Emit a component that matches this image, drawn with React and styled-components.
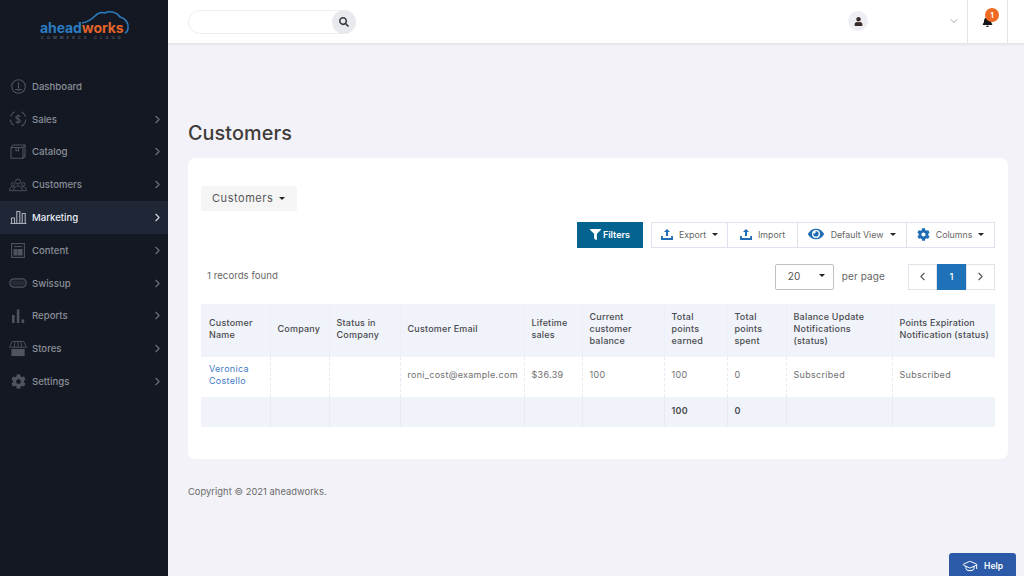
import React from 'react';
import styled, { createGlobalStyle } from 'styled-components';
import { ChevronRight, ChevronLeft, ChevronDown, GraduationCap } from 'lucide-react';
import { FaCog, FaEye, FaFilter, FaSearch, FaUser, FaBell } from 'react-icons/fa';

const GlobalStyle = createGlobalStyle`
  html, body { margin: 0; padding: 0; height: 100%; }
  body { font-family: Inter, "Liberation Sans", sans-serif; background: #f2f2f8; color: #555; overflow: hidden; }
  * { box-sizing: border-box; }
`;

const Page = styled.div`
  display: flex;
  width: 1024px;
  height: 576px;
  position: relative;
  overflow: hidden;
`;

const Sidebar = styled.aside`
  width: 168px;
  flex-shrink: 0;
  background: #131823;
  display: flex;
  flex-direction: column;
`;

const LogoWrap = styled.div`
  height: 70px;
  padding: 10px 0 0 40px;
`;

const Logo = styled.div`
  position: relative;
  width: 90px;
  height: 30px;
`;

const CloudArc = styled.svg`
  position: absolute;
  left: 0;
  top: 0;
`;

const LogoText = styled.div`
  position: absolute;
  left: 0;
  top: 9px;
  font-size: 14px;
  font-weight: 700;
  letter-spacing: -0.1px;
  line-height: 18px;
  color: #2b7cc0;
  white-space: nowrap;
`;

const LogoOrange = styled.span`
  color: #e2642a;
`;

const LogoSub = styled.div`
  position: absolute;
  left: 1px;
  top: 25px;
  font-size: 3.8px;
  letter-spacing: 3.3px;
  line-height: 6px;
  color: #7a7f88;
  white-space: nowrap;
`;

const Nav = styled.nav`
  display: flex;
  flex-direction: column;
`;

const NavItem = styled.a`
  height: 32.8px;
  display: flex;
  align-items: center;
  padding: 0 4px 0 9px;
  font-size: 9.6px;
  font-weight: 500;
  color: ${p => (p.$active ? '#e8edf4' : '#8b8f98')};
  background: ${p => (p.$active ? '#1f2635' : 'transparent')};
`;

const NavIcon = styled.span`
  width: 18px;
  height: 18px;
  margin-right: 5px;
  display: flex;
  align-items: center;
  justify-content: center;
  color: ${p => (p.$active ? '#a9afb9' : '#4e535e')};
`;

const NavLabel = styled.span`
  flex: 1;
`;

const Main = styled.div`
  flex: 1;
  display: flex;
  flex-direction: column;
  min-width: 0;
`;

const Header = styled.header`
  height: 44px;
  background: #fff;
  border-bottom: 1px solid #e4e4ea;
  box-shadow: 0 1px 2px rgba(0, 0, 0, 0.05);
  display: flex;
  align-items: center;
  padding-left: 20px;
`;

const SearchBox = styled.div`
  width: 168px;
  height: 24px;
  display: flex;
  justify-content: flex-end;
  border: 1px solid #eeeef0;
  border-radius: 12px;
`;

const SearchBtn = styled.button`
  width: 24px;
  height: 24px;
  margin: -1px;
  padding: 0;
  border: 0;
  border-radius: 50%;
  background: #e8e9ed;
  color: #3c3c44;
  display: flex;
  align-items: center;
  justify-content: center;
`;

const HeaderRight = styled.div`
  margin-left: auto;
  height: 44px;
  display: flex;
  align-items: center;
  padding-right: 16px;
`;

const Avatar = styled.div`
  width: 20px;
  height: 20px;
  margin-top: -1px;
  border-radius: 50%;
  background: #eeeff4;
  color: #3a2c28;
  display: flex;
  align-items: center;
  justify-content: center;
`;

const UserChevron = styled.div`
  margin: -1px 7px 0 80px;
  color: #85878e;
  display: flex;
`;

const BellCell = styled.div`
  position: relative;
  width: 41px;
  height: 44px;
  border-left: 1px solid #e4e4ea;
  border-right: 1px solid #e4e4ea;
  display: flex;
  align-items: center;
  justify-content: center;
  color: #15151c;
`;

const Badge = styled.span`
  position: absolute;
  top: 8px;
  left: 17px;
  width: 14px;
  height: 14px;
  border-radius: 50%;
  background: #ef6a23;
  color: #fff;
  font-size: 8px;
  font-weight: 600;
  line-height: 14px;
  text-align: center;
`;

const Content = styled.main`
  padding: 77px 16px 0 20px;
`;

const Title = styled.h1`
  margin: 0 0 13px;
  font-size: 19.8px;
  line-height: 24px;
  font-weight: 500;
  letter-spacing: 0.1px;
  color: #403c3a;
`;

const Card = styled.section`
  height: 301px;
  background: #fff;
  border-radius: 7px;
  padding: 28px 13px 0;
`;

const Dropdown = styled.div`
  width: 96px;
  height: 25px;
  background: #f5f5f5;
  border-radius: 2px;
  display: flex;
  align-items: center;
  padding: 0 0 1px 11px;
  gap: 6px;
  font-size: 11px;
  letter-spacing: 0.55px;
  color: #555;
`;

const Caret = styled.span`
  display: inline-block;
  width: 0;
  height: 0;
  border-left: 3px solid transparent;
  border-right: 3px solid transparent;
  border-top: 3px solid #222;
`;

const Toolbar = styled.div`
  display: flex;
  justify-content: flex-end;
  margin-top: 11px;
  height: 26px;
`;

const FilterBtn = styled.button`
  width: 66px;
  height: 26px;
  margin-right: 8px;
  border: 0;
  padding: 0 0 2px;
  background: #05638f;
  color: #fff;
  font: 600 9px Inter, sans-serif;
  display: flex;
  align-items: center;
  justify-content: center;
  gap: 2px;
`;

const ToolGroup = styled.div`
  display: flex;
  border: 1px solid #dfe2ec;
`;

const ToolBtn = styled.div`
  width: ${p => p.$w}px;
  padding-bottom: 2px;
  display: flex;
  align-items: center;
  justify-content: center;
  gap: ${p => p.$gap || 6}px;
  font-size: 8.8px;
  color: #666;
  border-left: ${p => (p.$first ? '0' : '1px solid #dfe2ec')};
  svg { color: #1f6db5; }
`;

const PagerRow = styled.div`
  display: flex;
  align-items: center;
  height: 26px;
  margin-top: 16px;
  padding-left: 6px;
  font-size: 9.6px;
  color: #666;
`;

const Found = styled.span`
  margin: 0 auto 3px 0;
  letter-spacing: 0.05px;
`;

const PerSelect = styled.div`
  width: 59px;
  height: 26px;
  border: 1px solid #bfc1c8;
  border-radius: 2px;
  display: flex;
  align-items: center;
  justify-content: space-between;
  padding: 0 8px 3px 12px;
  color: #555;
  font-size: 10px;
`;

const PerPage = styled.span`
  margin: 0 23px 3px 8px;
  font-size: 10px;
  letter-spacing: 0.1px;
`;

const PageBtn = styled.div`
  width: 29px;
  height: 26px;
  padding-bottom: 2px;
  display: flex;
  align-items: center;
  justify-content: center;
  background: ${p => (p.$active ? '#1f72b8' : '#fff')};
  color: ${p => (p.$active ? '#fff' : '#555')};
  border: 1px solid ${p => (p.$active ? '#1f72b8' : '#e1e3ea')};
  font-size: 9.5px;
  font-weight: 500;
`;

const Table = styled.table`
  margin-top: 14px;
  width: 794px;
  table-layout: fixed;
  border-collapse: collapse;
  font-size: 9px;
  line-height: 12px;
  letter-spacing: 0.2px;
`;

const Th = styled.th`
  height: 53px;
  padding: 0 8px 4px 7px;
  background: #f0f3f9;
  text-align: left;
  font-weight: 500;
  color: #4a4a4f;
  border-left: 1px solid #eceff5;
  &:first-child { padding-left: 8px; border-left: 0; }
  &:last-child { padding-right: 1px; }
`;

const Td = styled.td`
  height: 40px;
  padding: 0 2px 4px 7px;
  color: #707070;
  border-left: 1px dashed #e8e9ee;
  letter-spacing: 0.3px;
  &:first-child { padding-left: 8px; border-left: 0; }
`;

const Total = styled.td`
  height: 30px;
  padding: 0 2px 3px 7px;
  background: #f0f3f9;
  font-weight: 600;
  color: #4a4a4f;
  border-left: 1px solid #e8ebf2;
  &:first-child { border-left: 0; }
`;

const Link = styled.a`
  color: #3f7bc8;
`;

const Copyright = styled.p`
  margin: 27px 0 0;
  font-size: 9.3px;
  line-height: 12px;
  letter-spacing: 0.06px;
  color: #6a6a6a;
`;

const HelpBtn = styled.button`
  position: absolute;
  right: 8px;
  bottom: 0;
  width: 67px;
  height: 23px;
  padding: 2px 0 0 0;
  border: 0;
  border-radius: 3px 3px 0 0;
  background: #2b5ba8;
  color: #fff;
  font: 600 8.5px Inter, sans-serif;
  display: flex;
  align-items: center;
  justify-content: center;
  gap: 6px;
`;

const Gauge = () => (
  <svg width="17" height="17" viewBox="0 0 17 17" fill="none" stroke="currentColor" strokeWidth="1.1">
    <circle cx="8.5" cy="8.5" r="6.8" />
    <path d="M8.5 4.5v6M5 11.5h2.5l1 1.2 1-1.2H12" />
  </svg>
);

const Dollar = () => (
  <svg width="18" height="18" viewBox="0 0 18 18" fill="none" stroke="currentColor" strokeWidth="1.1">
    <path d="M5.6 1.8A7.8 7.8 0 0 0 1.6 6.5M1.3 9.500a7.800 7.800 0 0 0 3.300 5.800M12.400 16.200A7.800 7.800 0 0 0 16.700 9.500M16.400 6.500A7.800 7.800 0 0 0 12.400 1.800" />
    <path d="M11.400 6.800C10.800 5.400 6.800 5.400 6.800 7.500s4.600 1.200 4.600 3.300-4 2.100-4.600.7M9 4.300v9.400" />
  </svg>
);

const Box = () => (
  <svg width="16" height="15" viewBox="0 0 16 15" fill="none" stroke="currentColor" strokeWidth="1.1">
    <path d="M1 3.5 3 1h12v11.5L13 14.2H1z" />
    <path d="M1 3.5h12v10.7M13 3.5 15 1M6 3.5v3.2h2.6V3.5" />
  </svg>
);

const Group = () => (
  <svg width="19" height="14" viewBox="0 0 19 14" fill="none" stroke="currentColor" strokeWidth="1">
    <circle cx="9.5" cy="3.4" r="2.6" />
    <path d="M5 13c0-3.2 1.6-5 4.5-5S14 9.8 14 13z" />
    <circle cx="4" cy="6.2" r="1.8" />
    <circle cx="15" cy="6.2" r="1.8" />
    <path d="M5 13H.6c0-2.6 1-4 3.4-4 .8 0 1.4.2 1.8.5M14 13h4.400c0-2.600-1-4-3.400-4-.8 0-1.400.2-1.800.5" />
  </svg>
);

const MarketingBars = () => (
  <svg width="17" height="15" viewBox="0 0 17 15" fill="none" stroke="currentColor" strokeWidth="1.1">
    <path d="M.5 13.5h16M1.5 13.5V8h3v5.5M6.8 13.5V1.5h3v12M12.2 13.5V3.5h3v10" />
  </svg>
);

const Layout = () => (
  <svg width="14" height="15" viewBox="0 0 14 15" fill="none" stroke="currentColor" strokeWidth="1.1">
    <rect x="0.6" y="0.6" width="12.8" height="13.8" />
    <path d="M3 3.5h8" />
    <path d="M3 6.5h3v5.5H3zM7.500 6.500H11v5.500H7.500z" fill="currentColor" />
  </svg>
);

const Swiss = () => (
  <svg width="18" height="10" viewBox="0 0 18 10" fill="none" stroke="currentColor" strokeWidth="1.2">
    <rect x="0.8" y="0.8" width="16.4" height="8.4" rx="4.2" />
    <path d="M4.5 5h9" strokeWidth="5" stroke="#252a35" strokeLinecap="round" />
  </svg>
);

const SolidBars = () => (
  <svg width="14" height="14" viewBox="0 0 14 14" fill="currentColor">
    <rect x="1" y="6" width="2.6" height="8" />
    <rect x="5.8" y="0.5" width="2.6" height="13.5" />
    <rect x="10.6" y="10.4" width="2.6" height="3.6" />
  </svg>
);

const StoreSolid = () => (
  <svg width="19" height="17" viewBox="0 0 19 17" fill="currentColor">
    <path d="M3.5 1h12l3 6.2H.5z" fill="none" stroke="currentColor" strokeWidth="1" />
    <path d="M6.5 1 5.4 7.2M9.5 1v6.2M12.5 1l1.1 6.2" stroke="currentColor" strokeWidth="1" />
    <path d="M2.5 9h14v7.5h-14z" />
  </svg>
);

const Tray = () => (
  <svg width="12" height="11" viewBox="0 0 13 12" fill="currentColor">
    <path d="M6.5 0 9.8 3.2H7.6v4.3H5.400V3.200H3.200z" />
    <path d="M0 7.500h2v2.300h9V7.500h2V12H0z" />
  </svg>
);

const menu = [
  { label: 'Dashboard', icon: <Gauge />, plain: true },
  { label: 'Sales', icon: <Dollar /> },
  { label: 'Catalog', icon: <Box /> },
  { label: 'Customers', icon: <Group /> },
  { label: 'Marketing', icon: <MarketingBars />, active: true },
  { label: 'Content', icon: <Layout /> },
  { label: 'Swissup', icon: <Swiss /> },
  { label: 'Reports', icon: <SolidBars /> },
  { label: 'Stores', icon: <StoreSolid /> },
  { label: 'Settings', icon: <FaCog size={15} /> },
];

const columns = [
  { w: 69, t: 'Customer Name' },
  { w: 59, t: 'Company' },
  { w: 71, t: 'Status in Company' },
  { w: 124, t: 'Customer Email' },
  { w: 58, t: 'Lifetime sales' },
  { w: 82, t: 'Current customer balance' },
  { w: 63, t: 'Total points earned' },
  { w: 59, t: 'Total points spent' },
  { w: 106, t: 'Balance Update Notifications (status)' },
  { w: 103, t: 'Points Expiration Notification (status)' },
];

const Col = styled.col`
  width: ${p => p.$w}px;
`;

const App = () => (
  <Page>
    <GlobalStyle />
    <Sidebar>
      <LogoWrap>
        <Logo>
          <CloudArc width="90" height="30" viewBox="0 0 90 30" fill="none" stroke="#2b7cc0" strokeWidth="1.6">
            <path d="M42 13C48 12 52 9 55 6C58 3 62 2 65 3C68 1 76 1 80 7C85 8 89 13 88 18C88 20 87 22 85 23" />
          </CloudArc>
          <LogoText>ahead<LogoOrange>works</LogoOrange></LogoText>
          <LogoSub>COMMERCE CLOUD</LogoSub>
        </Logo>
      </LogoWrap>
      <Nav>
        {menu.map(m => (
          <NavItem key={m.label} $active={m.active}>
            <NavIcon $active={m.active}>{m.icon}</NavIcon>
            <NavLabel>{m.label}</NavLabel>
            {!m.plain && <ChevronRight size={13} strokeWidth={2} color={m.active ? '#d5d8de' : '#6d717a'} />}
          </NavItem>
        ))}
      </Nav>
    </Sidebar>
    <Main>
      <Header>
        <SearchBox>
          <SearchBtn><FaSearch size={10} /></SearchBtn>
        </SearchBox>
        <HeaderRight>
          <Avatar><FaUser size={9} /></Avatar>
          <UserChevron><ChevronDown size={12} strokeWidth={1.5} /></UserChevron>
          <BellCell>
            <FaBell size={11} />
            <Badge>1</Badge>
          </BellCell>
        </HeaderRight>
      </Header>
      <Content>
        <Title>Customers</Title>
        <Card>
          <Dropdown>Customers <Caret /></Dropdown>
          <Toolbar>
            <FilterBtn><FaFilter size={11} />Filters</FilterBtn>
            <ToolGroup>
              <ToolBtn $w={75} $first><Tray />Export <Caret /></ToolBtn>
              <ToolBtn $w={70}><Tray />Import</ToolBtn>
              <ToolBtn $w={109} $gap={7}><FaEye size={16} />Default View <Caret /></ToolBtn>
              <ToolBtn $w={88}><FaCog size={13} />Columns <Caret /></ToolBtn>
            </ToolGroup>
          </Toolbar>
          <PagerRow>
            <Found>1 records found</Found>
            <PerSelect>20 <Caret /></PerSelect>
            <PerPage>per page</PerPage>
            <PageBtn><ChevronLeft size={13} /></PageBtn>
            <PageBtn $active>1</PageBtn>
            <PageBtn><ChevronRight size={13} /></PageBtn>
          </PagerRow>
          <Table>
            <colgroup>
              {columns.map(c => <Col key={c.t} $w={c.w} />)}
            </colgroup>
            <thead>
              <tr>
                {columns.map(c => <Th key={c.t}>{c.t}</Th>)}
              </tr>
            </thead>
            <tbody>
              <tr>
                <Td><Link>Veronica Costello</Link></Td>
                <Td />
                <Td />
                <Td>roni_cost@example.com</Td>
                <Td>$36.39</Td>
                <Td>100</Td>
                <Td>100</Td>
                <Td>0</Td>
                <Td>Subscribed</Td>
                <Td>Subscribed</Td>
              </tr>
              <tr>
                <Total />
                <Total />
                <Total />
                <Total />
                <Total />
                <Total />
                <Total>100</Total>
                <Total>0</Total>
                <Total />
                <Total />
              </tr>
            </tbody>
          </Table>
        </Card>
        <Copyright>Copyright © 2021 aheadworks.</Copyright>
      </Content>
    </Main>
    <HelpBtn><GraduationCap size={16} strokeWidth={1.5} />Help</HelpBtn>
  </Page>
);

export default App;
